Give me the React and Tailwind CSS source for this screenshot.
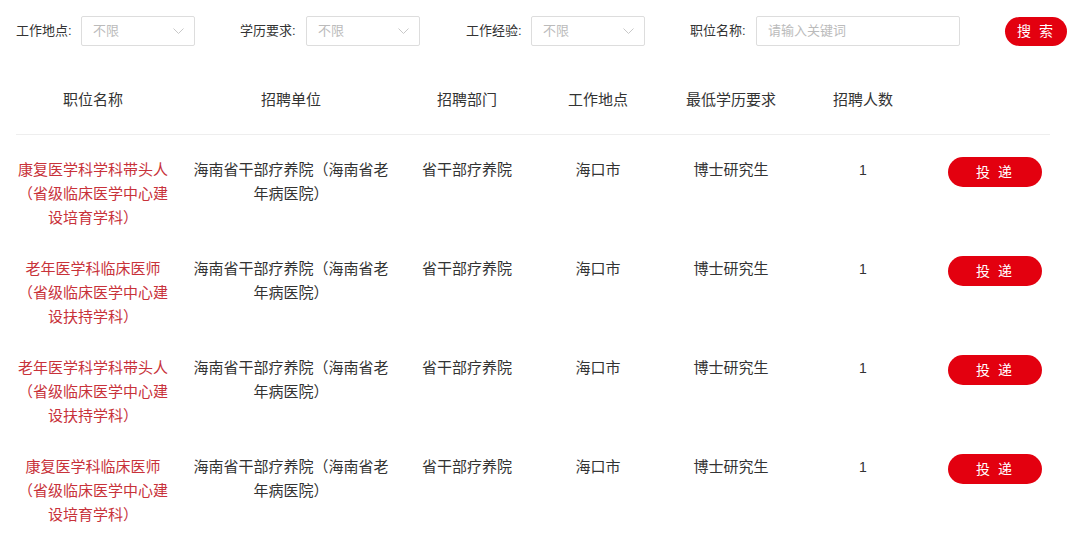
import React from "react";

const jobs = [
  { title: "康复医学科学科带头人（省级临床医学中心建设培育学科）" },
  { title: "老年医学科临床医师（省级临床医学中心建设扶持学科）" },
  { title: "老年医学科学科带头人（省级临床医学中心建设扶持学科）" },
  { title: "康复医学科临床医师（省级临床医学中心建设培育学科）" },
];

const cols = "grid grid-cols-[154px_242px_110px_152px_114px_150px_112px]";

function Chevron() {
  return (
    <svg width="11" height="7" viewBox="0 0 11 7" className="text-[#c8c8c8]">
      <polyline points="0.5,0.5 5.5,5.5 10.5,0.5" fill="none" stroke="currentColor" strokeWidth="1" />
    </svg>
  );
}

function Select({ label, labelW, className = "" }) {
  return (
    <div className={`flex items-center ${className}`}>
      <span className={`${labelW} text-[13px] text-[#333]`}>{label}:</span>
      <div className="flex h-[30px] w-[114px] items-center justify-between border border-[#ddd] rounded-[2px] pl-[11px] pr-[10px]">
        <span className="text-[13px] text-[#bbb]">不限</span>
        <Chevron />
      </div>
    </div>
  );
}

export default function App() {
  return (
    <div className="min-h-[538px] bg-white font-['Liberation_Sans','Noto_Sans_CJK_SC',sans-serif] text-[#333]">
      {/* 筛选条件 */}
      <div className="flex items-center pl-4 pt-4">
        <Select label="工作地点" labelW="w-[65px]" />
        <Select label="学历要求" labelW="w-[66px]" className="ml-[45px]" />
        <Select label="工作经验" labelW="w-[65px]" className="ml-[46px]" />
        <div className="ml-[45px] flex items-center">
          <span className="w-[66px] text-[13px] text-[#333]">职位名称:</span>
          <div className="flex h-[30px] w-[204px] items-center border border-[#ddd] rounded-[2px] pl-[11px]">
            <span className="text-[13px] text-[#bbb]">请输入关键词</span>
          </div>
        </div>
        <button className="ml-[45px] h-[29px] w-[62px] rounded-full bg-[#e3000f] text-[14px] text-white tracking-[2px]">
          搜 索
        </button>
      </div>

      {/* 表格 */}
      <div className="ml-4 w-[1034px]">
        <div className={`${cols} mt-[42px] pb-[22px] border-b border-[#eee] text-[15px] leading-[24px] text-center`}>
          <div>职位名称</div>
          <div>招聘单位</div>
          <div>招聘部门</div>
          <div>工作地点</div>
          <div>最低学历要求</div>
          <div>招聘人数</div>
          <div />
        </div>

        {jobs.map((job, i) => (
          <div key={i} className={`${cols} h-[99px] pt-[23px] text-[15px] leading-[24px] text-center items-start`}>
            <div className="text-[#c8323a]">{job.title}</div>
            <div className="mx-auto w-[200px]">海南省干部疗养院（海南省老年病医院）</div>
            <div>省干部疗养院</div>
            <div>海口市</div>
            <div>博士研究生</div>
            <div className="text-[14px]">1</div>
            <div className="flex justify-center pl-[2px]">
              <button className="mt-[-1px] h-[30px] w-[94px] rounded-full bg-[#e3000f] text-[14px] text-white tracking-[2px]">
                投 递
              </button>
            </div>
          </div>
        ))}
      </div>
    </div>
  );
}
